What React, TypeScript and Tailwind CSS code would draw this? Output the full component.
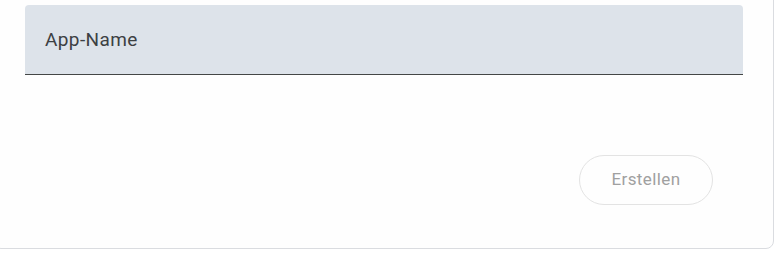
export default function App() {
  return (
    <div className="w-[783px] h-[257px] overflow-hidden bg-white" style={{ fontFamily: "Roboto, 'Liberation Sans', sans-serif" }}>
      <div className="-mt-[20px] -ml-[7px] w-[781px] h-[269px] border border-[#dadce0] rounded-[8px] bg-[#fefefe] pt-[24px] pl-[31px] pr-[30px] flex flex-col">
        <div className="h-[70px] bg-[#dde3ea] rounded-t-[4px] border-b border-[#444746] flex items-center pl-[20px] pb-[1px]">
          <span className="text-[19px] tracking-[0.4px] text-[#3c4043] leading-none">App-Name</span>
        </div>
        <div className="flex justify-end mt-[80px] pr-[30px]">
          <button className="w-[134px] h-[50px] rounded-full border border-[#e3e3e3] bg-transparent text-[17px] tracking-[0.4px] font-normal text-[#a0a0a0] flex items-center justify-center">
            Erstellen
          </button>
        </div>
      </div>
    </div>
  );
}
